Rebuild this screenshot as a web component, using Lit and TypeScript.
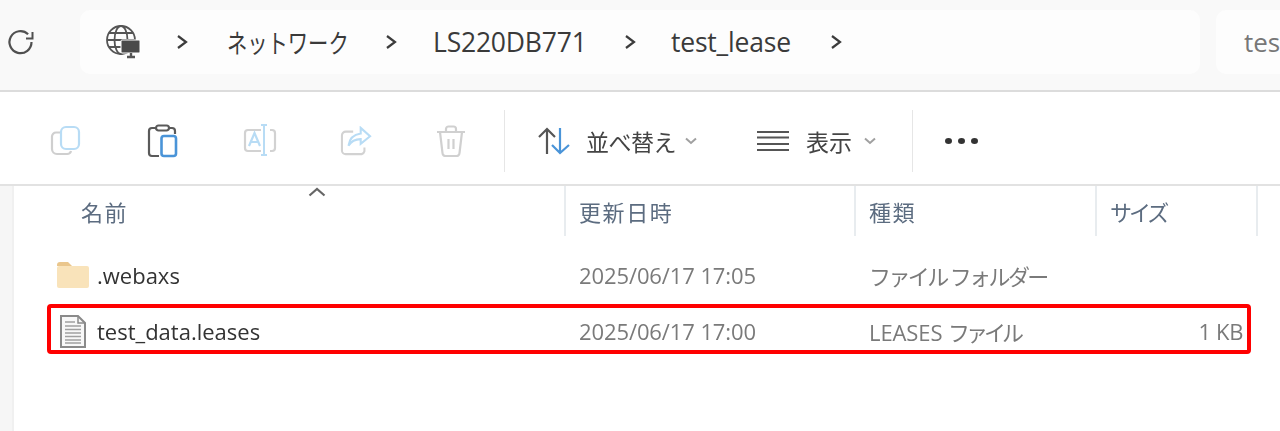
import { LitElement, html, css, svg } from "lit";
import { customElement } from "lit/decorators.js";

const chevron = (cls: string) => html`<span class="chev ${cls}">${svg`<svg width="13" height="16" viewBox="0 0 13 16"><path d="M2 2l8 6-8 6" fill="none" stroke="#3c3c3c" stroke-width="2.2"/></svg>`}</span>`;
const down = svg`<svg class="down" width="12" height="8" viewBox="0 0 12 8"><path d="M1 1.5l5 4.5 5-4.5" fill="none" stroke="#a0a0a0" stroke-width="2"/></svg>`;

@customElement("app-root")
export class AppRoot extends LitElement {
  static styles = css`
    :host { display: block; width: 1280px; height: 431px; overflow: hidden; background: #fff; font-family: "Open Sans", "Noto Sans CJK JP", sans-serif; color: #333; }
    .blur { filter: blur(0.6px); height: 431px; position: relative; }
    .top { background: #f9f9f9; border-bottom: 2px solid #dcdcdc; display: flex; align-items: flex-start; padding-top: 10px; height: 80px; }
    .reload { width: 80px; height: 64px; display: flex; align-items: center; padding: 2px 0 0 7px; box-sizing: border-box; flex: none; }
    .address { width: 1120px; height: 64px; background: #fdfdfd; border-radius: 10px; display: flex; align-items: center; flex: none; box-sizing: border-box; padding-left: 25px; font-size: 26.5px; color: #3a3a3a; }
    .globe { width: 36px; flex: none; display: flex; margin-right: 35px; }
    .crumb { flex: none; letter-spacing: -0.2px; white-space: nowrap; }
    .chev { flex: none; display: flex; }
    .c1 { margin-right: 36px; width: 122px; font-size: 26px; letter-spacing: 0; transform: scaleX(0.78); transform-origin: left center; }
    .c2 { width: 154px; margin-right: 37px; margin-left: -2px; padding-left: 2px; box-sizing: content-box; }
    .c3 { width: 120px; margin-right: 39px; }
    .chev1 { margin-right: 38px; }
    .chev2 { margin-right: 35px; }
    .chev3 { margin-right: 34px; }
    .search { margin-left: 16px; flex: 1; height: 64px; background: #fdfdfd; border-radius: 10px 0 0 10px; font-size: 26px; color: #777; display: flex; align-items: center; padding-left: 28px; overflow: hidden; }
    .tools { height: 86px; padding-top: 6px; display: flex; align-items: center; border-bottom: 2px solid #e2e2e2; padding-left: 48px; }
    .tool { width: 96.5px; display: flex; flex: none; padding-left: 2px; box-sizing: border-box; }
    .sep { width: 1px; height: 62px; background: #e6e6e6; flex: none; }
    .sep1 { margin: 0 32px 0 -26.5px; }
    .cmd { display: flex; align-items: center; flex: none; font-size: 23px; color: #444; white-space: nowrap; }
    .sort-label { margin: 0 11px 0 15px; width: 88px; letter-spacing: -0.5px; }
    .list { margin-left: 60px; }
    .view-label { margin: 0 10px 0 17px; width: 48px; }
    .sep2 { margin-left: 36px; }
    .dots { display: flex; margin-left: 32px; gap: 6px; }
    .dot { width: 7px; height: 6px; border-radius: 50%; background: #333; }
    .files { display: flex; height: 245px; }
    .strip { width: 12px; background: #f6f6f6; border-right: 2px solid #f0f0f0; flex: none; }
    .table { flex: 1; position: relative; }
    .row { display: grid; grid-template-columns: 552px 290px 241px 161px 1fr; }
    .head { height: 50px; align-items: center; color: #5c6c80; font-size: 22px; }
    .hcell { height: 50px; border-right: 2px solid #e8ecef; box-sizing: border-box; display: flex; align-items: center; padding-left: 13px; letter-spacing: 1.6px; position: relative; }
    .hname { padding-left: 67px; }
    .hsize { letter-spacing: -3px; }
    .caret { position: absolute; left: 294px; top: 1px; }
    .item { height: 56px; align-items: center; font-size: 22px; color: #7a7a7a; }
    .item1 { margin-top: 11px; }
    .name { display: flex; align-items: center; color: #333; padding-left: 42px; box-sizing: border-box; }
    .icon { width: 41px; flex: none; display: flex; }
    .doc { padding-left: 4px; box-sizing: border-box; }
    .date { padding-left: 13px; letter-spacing: -0.1px; }
    .type { padding-left: 13px; letter-spacing: -2.6px; white-space: nowrap; }
    .latin { letter-spacing: -0.1px; }
    .kana { letter-spacing: -4px; }
    .size { text-align: right; padding-right: 15px; letter-spacing: -0.4px; }
    .mark { position: absolute; left: 33px; top: 118px; width: 1204px; height: 50px; border: 4px solid #f00; border-radius: 4px; box-sizing: border-box; }
  `;

  render() {
    return html`<div class="blur">
      <div class="top">
        <div class="reload">
          <svg width="28" height="28" viewBox="0 0 28 28" fill="none" stroke="#505050" stroke-width="2.2"><path d="M24.5 13a11 11 0 1 1-3.4-7.8"/><path d="M25.5 3v6.5H19" stroke-width="2"/></svg>
        </div>
        <div class="address">
          <div class="globe">
            <svg width="36" height="34" viewBox="0 0 36 34" fill="none" stroke="#555" stroke-width="1.8"><circle cx="16" cy="15" r="14"/><ellipse cx="16" cy="15" rx="6.5" ry="14"/><path d="M2 15h28M4 8h24M4 22h24"/><rect x="16" y="15" width="19" height="13" rx="1" fill="#4a4a4a" stroke="#fff" stroke-width="1"/><path d="M22 32h8M26 28v4" stroke-width="2.4"/></svg>
          </div>
          ${chevron("chev1")}
          <span class="crumb c1">ネットワーク</span>
          ${chevron("chev2")}
          <span class="crumb c2">LS220DB771</span>
          ${chevron("chev3")}
          <span class="crumb c3">test_lease</span>
          ${chevron("")}
        </div>
        <div class="search">tes</div>
      </div>

      <div class="tools">
        <div class="tool"><svg width="32" height="32" viewBox="0 0 32 32" fill="none" stroke-width="2.2"><path d="M10 7.5H6a4 4 0 0 0-4 4V24a5 5 0 0 0 5 5h10a4 4 0 0 0 4-3" stroke="#cfcfcf"/><rect x="11" y="2" width="18" height="22" rx="5" stroke="#b8dcf5"/></svg></div>
        <div class="tool"><svg width="32" height="34" viewBox="0 0 32 34" fill="none" stroke-width="2.2"><path d="M9 4H5a3 3 0 0 0-3 3v22a3 3 0 0 0 3 3h7M22 4h3a3 3 0 0 1 3 3v3" stroke="#5a5a5a"/><rect x="9" y="1.5" width="13" height="5" rx="2.5" stroke="#5a5a5a"/><rect x="14.5" y="12" width="14.5" height="20" rx="2.5" stroke="#4a94d8" stroke-width="2.6"/></svg></div>
        <div class="tool"><svg width="34" height="34" viewBox="0 0 34 34" fill="none" stroke-width="2"><path d="M18 6H5a3 3 0 0 0-3 3v15a3 3 0 0 0 3 3h13M27 6h2a3 3 0 0 1 3 3v15a3 3 0 0 1-3 3h-2" stroke="#d2d2d2" stroke-width="2.2"/><path d="M18 1h6m-3 0v30m-3 0h6" stroke="#b8dcf5"/><path d="M6 22l5.5-13L17 22M8 18h7" stroke="#b8dcf5" stroke-width="2.2"/></svg></div>
        <div class="tool"><svg width="32" height="30" viewBox="0 0 34 32" fill="none" stroke-width="2.2"><path d="M14 6H6a4 4 0 0 0-4 4v16a4 4 0 0 0 4 4h17a4 4 0 0 0 3-3v-4" stroke="#d2d2d2"/><path d="M22 2l10 9-10 8v-5c-6 0-10 2-13 7 1-8 6-12 13-13z" stroke="#b8dcf5"/></svg></div>
        <div class="tool"><svg width="30" height="32" viewBox="0 0 30 32" fill="none" stroke="#d0d0d0" stroke-width="2.2"><path d="M1 7h28M4 7l2.5 21a3 3 0 0 0 3 3h11a3 3 0 0 0 3-3L26 7M10 7V4a2.5 2.5 0 0 1 2.5-2.5h5A2.5 2.5 0 0 1 20 4v3M12.5 14v10M17.5 14v10"/></svg></div>
        <div class="sep sep1"></div>
        <div class="cmd">
          <svg width="34" height="28" viewBox="0 0 34 28" fill="none" stroke-width="2.2"><path d="M10 27V3M2 10l8-8 8 8" stroke="#555"/><path d="M23 1v25M15 18l8 8 9-8" stroke="#4a94d8"/></svg>
          <span class="sort-label">並べ替え</span>${down}
        </div>
        <div class="cmd list">
          <svg width="32" height="22" viewBox="0 0 32 22" fill="none" stroke="#555" stroke-width="2"><path d="M0 2h32M0 7.5h32M0 14h32M0 20h32"/></svg>
          <span class="view-label">表示</span>${down}
        </div>
        <div class="sep sep2"></div>
        <div class="dots"><span class="dot"></span><span class="dot"></span><span class="dot"></span></div>
      </div>

      <div class="files">
        <div class="strip"></div>
        <div class="table">
          <div class="row head">
            <div class="hcell hname">名前
              <svg class="caret" width="18" height="10" viewBox="0 0 18 10" fill="none" stroke="#666" stroke-width="2.2"><path d="M1.5 8.5L9 2l7.5 6.5"/></svg>
            </div>
            <div class="hcell">更新日時</div>
            <div class="hcell">種類</div>
            <div class="hcell hsize">サイズ</div>
            <div></div>
          </div>
          <div class="row item item1">
            <div class="name">
              <span class="icon"><svg width="34" height="28" viewBox="0 0 34 28"><path d="M1 4a3 3 0 0 1 3-3h8l4 4H1z" fill="#eac68c"/><rect x="1" y="5" width="32" height="22" rx="2" fill="#f9e3ba"/></svg></span>
              .webaxs
            </div>
            <div class="date">2025/06/17 17:05</div>
            <div class="type">ファイル フォルダー</div>
            <div class="size"></div>
            <div></div>
          </div>
          <div class="row item">
            <div class="name">
              <span class="icon doc"><svg width="26" height="33" viewBox="0 0 26 33" fill="none"><path d="M1 1h17l7 7v24H1z" fill="#f8f8f8" stroke="#8a8a8a" stroke-width="2"/><path d="M18 1v7h7" stroke="#8a8a8a" stroke-width="1.5"/><path d="M5 7h10M5 11h16M5 14.500h16M5 18h16M5 21.500h16M5 25h16M5 28h16" stroke="#a0a0a0" stroke-width="1.6"/></svg></span>
              test_data.leases
            </div>
            <div class="date">2025/06/17 17:00</div>
            <div class="type"><span class="latin">LEASES </span><span class="kana">ファイル</span></div>
            <div class="size">1 KB</div>
            <div></div>
          </div>
          <div class="mark"></div>
        </div>
      </div>
    </div>`;
  }
}
